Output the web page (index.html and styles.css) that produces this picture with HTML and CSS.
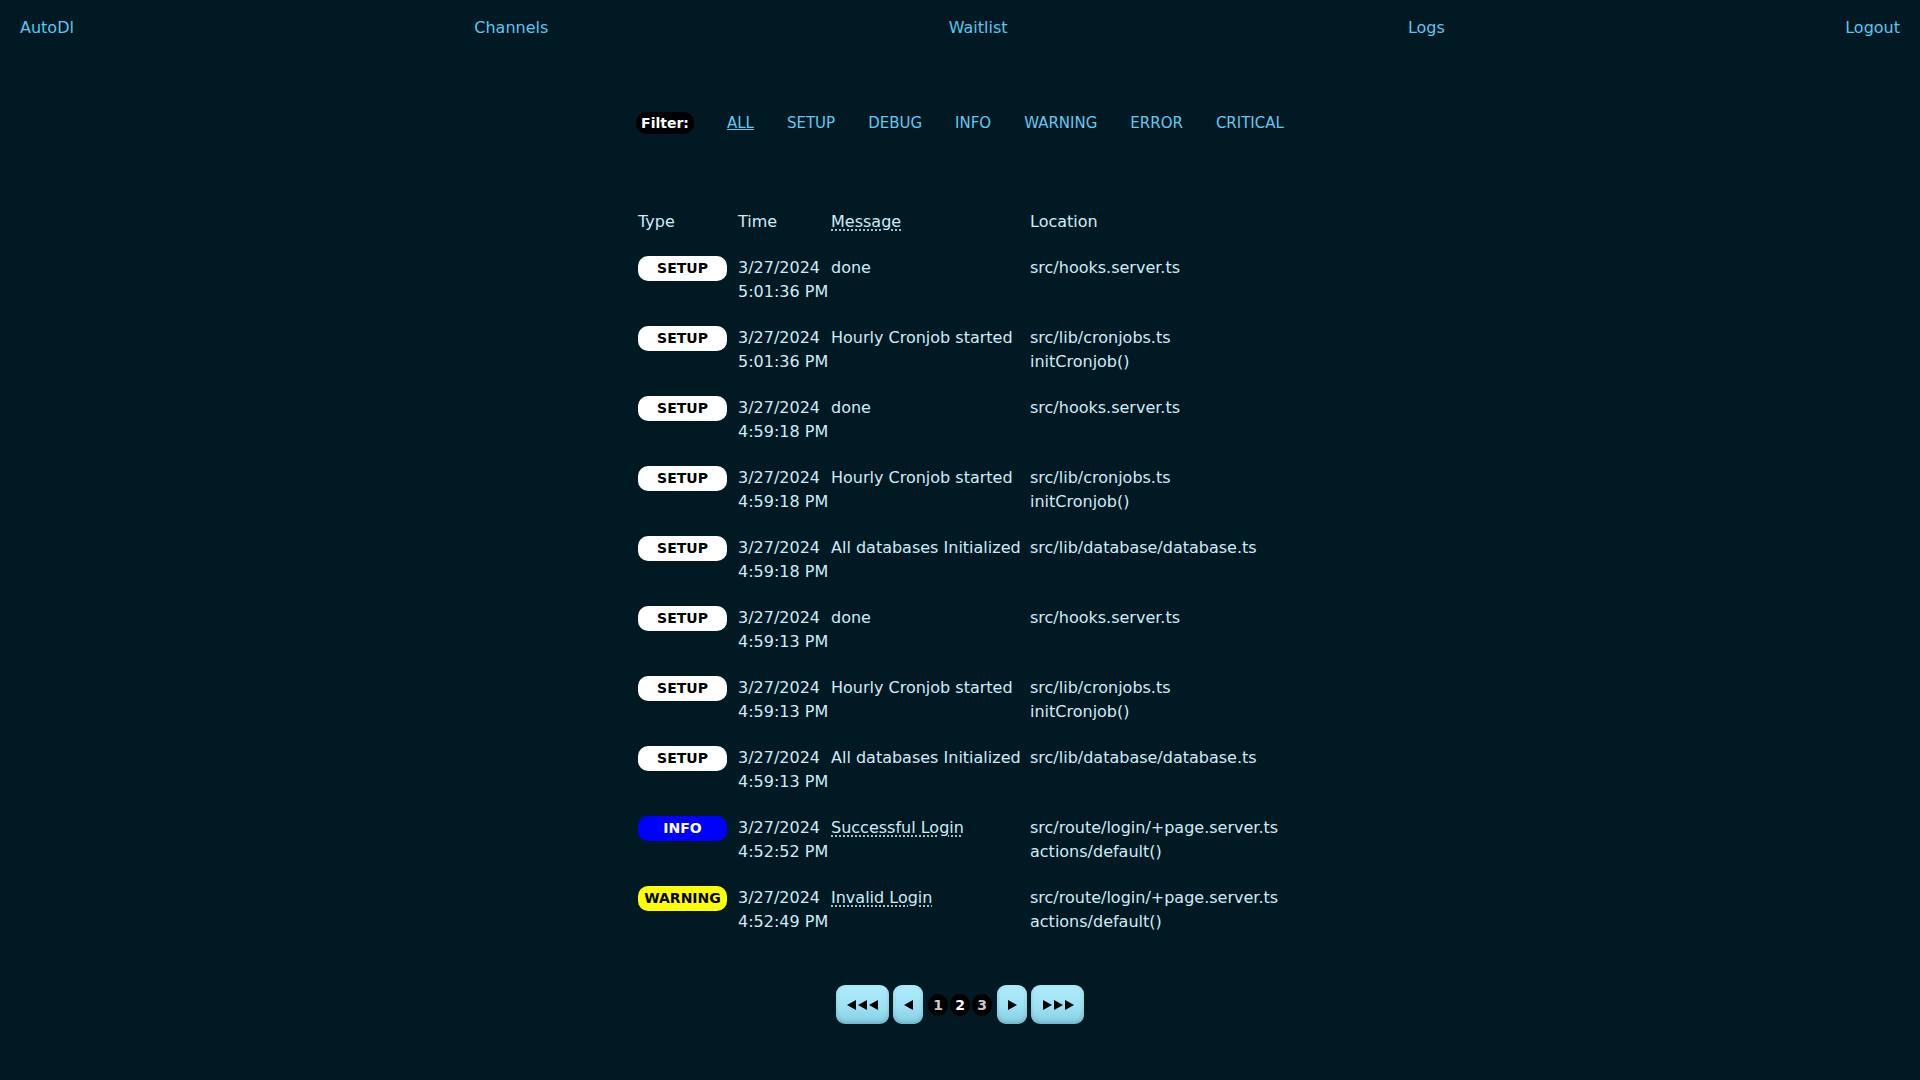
FILE: index.html
```html
<!DOCTYPE html>
<html lang="en">
<head>
<meta charset="utf-8">
<title>Logs - AutoDl</title>
<link rel="stylesheet" href="styles.css">
</head>
<body>
<nav class="nav">
  <a class="nav-link" href="#">AutoDl</a>
  <a class="nav-link" href="#">Channels</a>
  <a class="nav-link" href="#">Waitlist</a>
  <a class="nav-link" href="#">Logs</a>
  <a class="nav-link" href="#">Logout</a>
</nav>

<div class="filter">
  <span class="filter-label">Filter:</span>
  <a class="filter-link active" href="#">ALL</a>
  <a class="filter-link" href="#">SETUP</a>
  <a class="filter-link" href="#">DEBUG</a>
  <a class="filter-link" href="#">INFO</a>
  <a class="filter-link" href="#">WARNING</a>
  <a class="filter-link" href="#">ERROR</a>
  <a class="filter-link" href="#">CRITICAL</a>
</div>

<table class="logs">
  <colgroup>
    <col class="c-type"><col class="c-time"><col class="c-msg"><col class="c-loc">
  </colgroup>
  <thead>
    <tr><th>Type</th><th>Time</th><th><abbr class="dotted" title="Hover for details">Message</abbr></th><th>Location</th></tr>
  </thead>
  <tbody>
    <tr><td><span class="badge setup">SETUP</span></td><td><span class="line">3/27/2024</span><span class="line">5:01:36 PM</span></td><td>done</td><td><span class="line">src/hooks.server.ts</span></td></tr>
    <tr><td><span class="badge setup">SETUP</span></td><td><span class="line">3/27/2024</span><span class="line">5:01:36 PM</span></td><td>Hourly Cronjob started</td><td><span class="line">src/lib/cronjobs.ts</span><span class="line">initCronjob()</span></td></tr>
    <tr><td><span class="badge setup">SETUP</span></td><td><span class="line">3/27/2024</span><span class="line">4:59:18 PM</span></td><td>done</td><td><span class="line">src/hooks.server.ts</span></td></tr>
    <tr><td><span class="badge setup">SETUP</span></td><td><span class="line">3/27/2024</span><span class="line">4:59:18 PM</span></td><td>Hourly Cronjob started</td><td><span class="line">src/lib/cronjobs.ts</span><span class="line">initCronjob()</span></td></tr>
    <tr><td><span class="badge setup">SETUP</span></td><td><span class="line">3/27/2024</span><span class="line">4:59:18 PM</span></td><td>All databases Initialized</td><td><span class="line">src/lib/database/database.ts</span></td></tr>
    <tr><td><span class="badge setup">SETUP</span></td><td><span class="line">3/27/2024</span><span class="line">4:59:13 PM</span></td><td>done</td><td><span class="line">src/hooks.server.ts</span></td></tr>
    <tr><td><span class="badge setup">SETUP</span></td><td><span class="line">3/27/2024</span><span class="line">4:59:13 PM</span></td><td>Hourly Cronjob started</td><td><span class="line">src/lib/cronjobs.ts</span><span class="line">initCronjob()</span></td></tr>
    <tr><td><span class="badge setup">SETUP</span></td><td><span class="line">3/27/2024</span><span class="line">4:59:13 PM</span></td><td>All databases Initialized</td><td><span class="line">src/lib/database/database.ts</span></td></tr>
    <tr><td><span class="badge info">INFO</span></td><td><span class="line">3/27/2024</span><span class="line">4:52:52 PM</span></td><td><abbr class="dotted" title="Details">Successful Login</abbr></td><td><span class="line">src/route/login/+page.server.ts</span><span class="line">actions/default()</span></td></tr>
    <tr><td><span class="badge warning">WARNING</span></td><td><span class="line">3/27/2024</span><span class="line">4:52:49 PM</span></td><td><abbr class="dotted" title="Details">Invalid Login</abbr></td><td><span class="line">src/route/login/+page.server.ts</span><span class="line">actions/default()</span></td></tr>
  </tbody>
</table>

<div class="pager">
  <button class="pbtn wide" type="button" aria-label="First page">
    <svg width="32" height="10" viewBox="0 0 32 10"><polygon points="9,0 9,10 0,5"/><polygon points="20,0 20,10 11,5"/><polygon points="31,0 31,10 22,5"/></svg>
  </button>
  <button class="pbtn narrow" type="button" aria-label="Previous page">
    <svg width="9" height="10" viewBox="0 0 9 10"><polygon points="9,0 9,10 0,5"/></svg>
  </button>
  <div class="pages">
    <span class="pnum">1</span>
    <span class="pnum current">2</span>
    <span class="pnum">3</span>
  </div>
  <button class="pbtn narrow" type="button" aria-label="Next page">
    <svg width="9" height="10" viewBox="0 0 9 10"><polygon points="0,0 0,10 9,5"/></svg>
  </button>
  <button class="pbtn wide" type="button" aria-label="Last page">
    <svg width="32" height="10" viewBox="0 0 32 10"><polygon points="1,0 1,10 10,5"/><polygon points="12,0 12,10 21,5"/><polygon points="23,0 23,10 32,5"/></svg>
  </button>
</div>
</body>
</html>
```

FILE: styles.css
```css
html, body {
  margin: 0;
  padding: 0;
}

body {
  background: #011923;
  color: #cdecf7;
  font-family: "DejaVu Sans", "Open Sans", sans-serif;
  font-size: 16px;
  line-height: 24px;
  min-height: 100vh;
}

a {
  text-decoration: none;
}

.nav {
  display: flex;
  justify-content: space-between;
  padding: 16px 20px 14px;
}

.nav-link {
  color: #5cc6f0;
}

.filter {
  display: flex;
  justify-content: center;
  align-items: center;
  gap: 33px;
  margin-top: 57px;
  height: 24px;
  font-size: 15px;
}

.filter-label {
  background: #000;
  color: #fff;
  font-weight: bold;
  font-size: 14px;
  line-height: 22px;
  padding: 0 5px;
  border-radius: 10px;
}

.filter-link {
  color: #62c8f0;
}

.filter-link.active {
  text-decoration: underline;
}

.logs {
  margin: 65px auto 0;
  width: 644px;
  table-layout: fixed;
  border-collapse: collapse;
}

.c-type { width: 100px; }
.c-time { width: 93px; }
.c-msg { width: 199px; }
.c-loc { width: 252px; }

.logs th,
.logs td {
  text-align: left;
  vertical-align: top;
  font-weight: normal;
  white-space: nowrap;
  padding: 11px 0;
}

.logs th {
  padding: 10px 0 11px;
}

.line {
  display: block;
}

.dotted {
  text-decoration: underline dotted;
  text-underline-offset: 3px;
}

.badge {
  display: block;
  width: 89px;
  height: 25px;
  line-height: 25px;
  border-radius: 10px;
  text-align: center;
  font-weight: bold;
  font-size: 14px;
}

.badge.setup {
  background: #fff;
  color: #000;
}

.badge.info {
  background: #0000ff;
  color: #fff;
}

.badge.warning {
  background: #ffff00;
  color: #000;
}

.pager {
  display: flex;
  justify-content: center;
  align-items: center;
  gap: 4px;
  margin-top: 40px;
}

.pbtn {
  display: flex;
  align-items: center;
  justify-content: center;
  height: 39px;
  padding: 0;
  border: none;
  border-radius: 9px;
  background: linear-gradient(180deg, #b0ecfa 0%, #9ee2f4 55%, #83cee3 100%);
  box-shadow: inset 0 -2px 4px rgba(0, 40, 60, 0.18);
  cursor: pointer;
}

.pbtn svg {
  fill: #000;
}

.pbtn.wide {
  width: 53px;
}

.pbtn.narrow {
  width: 30px;
}

.pages {
  display: flex;
  gap: 2px;
  margin: 0 1px;
}

.pnum {
  display: flex;
  align-items: center;
  justify-content: center;
  width: 20px;
  height: 22px;
  border-radius: 50%;
  background: #000;
  color: #c9c9c9;
  font-weight: bold;
  font-size: 14px;
}

.pnum.current {
  color: #fff;
}
```
